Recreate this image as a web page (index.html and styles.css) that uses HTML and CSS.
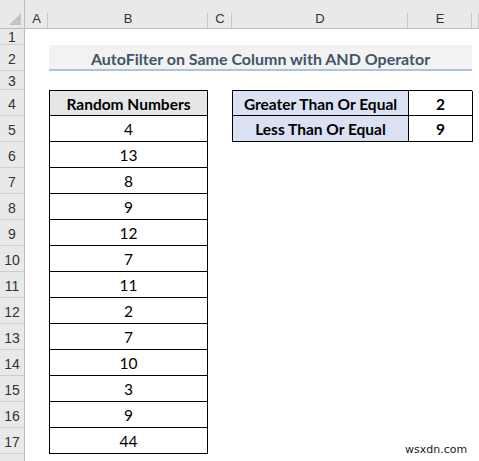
FILE: index.html
```html
<!DOCTYPE html>
<html>
<head>
<meta charset="utf-8">
<link rel="stylesheet" href="styles.css">
</head>
<body>
<div class="sheet">
  <div class="corner"><span class="tri"></span></div>
  <div class="colhead c-a">A</div>
  <div class="colhead c-b">B</div>
  <div class="colhead c-c">C</div>
  <div class="colhead c-d">D</div>
  <div class="colhead c-e">E</div>
  <div class="colhead c-f"></div>

  <div class="rowheads">
    <div class="rh r-short">1</div>
    <div class="rh">2</div>
    <div class="rh r-mid">3</div>
    <div class="rh">4</div>
    <div class="rh">5</div>
    <div class="rh">6</div>
    <div class="rh">7</div>
    <div class="rh">8</div>
    <div class="rh">9</div>
    <div class="rh">10</div>
    <div class="rh">11</div>
    <div class="rh">12</div>
    <div class="rh">13</div>
    <div class="rh">14</div>
    <div class="rh">15</div>
    <div class="rh">16</div>
    <div class="rh">17</div>
    <div class="rh r-last"></div>
  </div>

  <div class="title">AutoFilter on Same Column with AND Operator</div>

  <div class="numtable">
    <div class="nt-head">Random Numbers</div>
    <div class="nt-cell">4</div>
    <div class="nt-cell">13</div>
    <div class="nt-cell">8</div>
    <div class="nt-cell">9</div>
    <div class="nt-cell">12</div>
    <div class="nt-cell">7</div>
    <div class="nt-cell">11</div>
    <div class="nt-cell">2</div>
    <div class="nt-cell">7</div>
    <div class="nt-cell">10</div>
    <div class="nt-cell">3</div>
    <div class="nt-cell">9</div>
    <div class="nt-cell">44</div>
  </div>

  <div class="crit">
    <div class="cr-label">Greater Than Or Equal</div>
    <div class="cr-val">2</div>
    <div class="cr-label">Less Than Or Equal</div>
    <div class="cr-val">9</div>
  </div>

  <div class="wm">wsxdn.com</div>
</div>
</body>
</html>
```
FILE: styles.css
```css
html, body {
  margin: 0;
  padding: 0;
  background: #ffffff;
}
.sheet {
  position: relative;
  width: 479px;
  height: 461px;
  overflow: hidden;
  display: grid;
  grid-template-columns: 25px 23px 160px 24px 176px 64px 7px;
  grid-template-rows: 29px 16px 26px 19px repeat(14, 26px) 1fr;
  font-family: Lato, "Open Sans", "Liberation Sans", sans-serif;
  font-size: 15.5px;
  color: #000;
}
.corner {
  grid-column: 1;
  grid-row: 1;
  background: #e9e9e9;
  border-bottom: 1px solid #bdbdbd;
  border-right: 1px solid #bdbdbd;
  box-sizing: border-box;
  position: relative;
}
.corner .tri {
  position: absolute;
  right: 3px;
  bottom: 3px;
  width: 0;
  height: 0;
  border-left: 12px solid transparent;
  border-bottom: 12px solid #c4c4c4;
}
.colhead {
  grid-row: 1;
  background: #e9e9e9;
  border-bottom: 1px solid #bdbdbd;
  box-sizing: border-box;
  display: flex;
  align-items: flex-end;
  justify-content: center;
  padding-bottom: 2px;
  font-family: "Liberation Sans", Arial, sans-serif;
  font-size: 13px;
  color: #333;
  background-image: linear-gradient(#c8c8c8, #c8c8c8);
  background-size: 1px 15px;
  background-position: right bottom;
  background-repeat: no-repeat;
}
.c-a { grid-column: 2; }
.c-b { grid-column: 3; }
.c-c { grid-column: 4; }
.c-d { grid-column: 5; }
.c-e { grid-column: 6; }
.c-f { grid-column: 7; }

.rowheads {
  grid-column: 1;
  grid-row: 2 / -1;
  display: flex;
  flex-direction: column;
  background: #e9e9e9;
  border-right: 1px solid #bdbdbd;
}
.rh {
  height: 26px;
  box-sizing: border-box;
  border-bottom: 1px solid #cfcfcf;
  display: flex;
  align-items: center;
  justify-content: center;
  padding-top: 3px;
  font-family: "Liberation Sans", Arial, sans-serif;
  font-size: 14px;
  color: #333;
}
.r-short { height: 16px; padding-top: 1px; }
.r-mid { height: 19px; padding-top: 2px; }
.r-last { flex: 1; border-bottom: none; }

.title {
  grid-column: 3 / 7;
  grid-row: 3;
  margin-left: 1px;
  background: #f2f2f2;
  border-bottom: 2px solid #a9c4e4;
  box-sizing: border-box;
  display: flex;
  align-items: center;
  justify-content: center;
  padding-top: 2px;
  font-weight: bold;
  font-size: 16px;
  color: #44546a;
}

.numtable {
  grid-column: 3;
  grid-row: 5 / span 14;
  margin-left: 1px;
  display: flex;
  flex-direction: column;
  border-left: 1px solid #000;
  border-top: 1px solid #000;
}
.nt-head, .nt-cell {
  height: 26px;
  box-sizing: border-box;
  border-right: 1px solid #000;
  border-bottom: 1px solid #000;
  display: flex;
  align-items: center;
  justify-content: center;
  padding-top: 1px;
}
.nt-head:first-child { height: 25px; }
.nt-head {
  background: #e7e6e6;
  font-weight: bold;
}

.crit {
  grid-column: 5 / 7;
  grid-row: 5 / span 2;
  display: grid;
  grid-template-columns: 176px 64px;
  grid-template-rows: 25px 26px;
  border-left: 1px solid #000;
  border-top: 1px solid #000;
  box-sizing: border-box;
  height: 52px;
}
.cr-label, .cr-val {
  box-sizing: border-box;
  border-right: 1px solid #000;
  border-bottom: 1px solid #000;
  display: flex;
  align-items: center;
  justify-content: center;
  font-weight: bold;
  padding-top: 1px;
}
.cr-label {
  background: #d9e1f2;
}
.cr-val {
  background: #fff;
}
.wm {
  position: absolute;
  left: 405px;
  top: 443px;
  font-family: "DejaVu Sans", sans-serif;
  font-size: 11px;
  color: #222;
}
```
